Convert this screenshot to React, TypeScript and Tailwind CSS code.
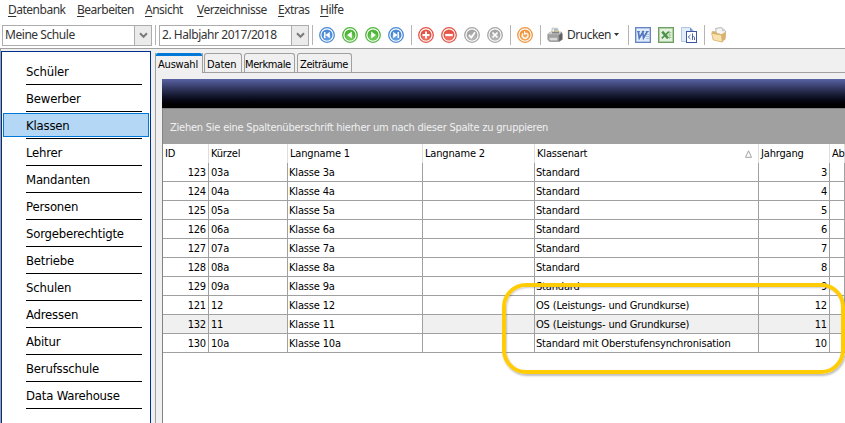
import React from "react";

const tahoma = "font-['DejaVu_Sans_Condensed','DejaVu_Sans',sans-serif] [font-stretch:condensed]";
const segoe = "font-['Noto_Sans','Open_Sans',sans-serif]";

const menu = [
  { t: "Datenbank", w: "w-[69px]" },
  { t: "Bearbeiten", w: "w-[68px]" },
  { t: "Ansicht", w: "w-[52px]" },
  { t: "Verzeichnisse", w: "w-[81px]" },
  { t: "Extras", w: "w-[42px]" },
  { t: "Hilfe", w: "w-[40px]" },
];

const nav = [
  "Schüler", "Bewerber", "Klassen", "Lehrer", "Mandanten", "Personen", "Sorgeberechtigte",
  "Betriebe", "Schulen", "Adressen", "Abitur", "Berufsschule", "Data Warehouse",
];

const rows = [
  ["123", "03a", "Klasse 3a", "Standard", "3"],
  ["124", "04a", "Klasse 4a", "Standard", "4"],
  ["125", "05a", "Klasse 5a", "Standard", "5"],
  ["126", "06a", "Klasse 6a", "Standard", "6"],
  ["127", "07a", "Klasse 7a", "Standard", "7"],
  ["128", "08a", "Klasse 8a", "Standard", "8"],
  ["129", "09a", "Klasse 9a", "Standard", "9"],
  ["121", "12", "Klasse 12", "OS (Leistungs- und Grundkurse)", "12"],
  ["132", "11", "Klasse 11", "OS (Leistungs- und Grundkurse)", "11"],
  ["130", "10a", "Klasse 10a", "Standard mit Oberstufensynchronisation", "10"],
];

const cols = "grid grid-cols-[46px_79px_135px_112px_224px_71px_15px]";

function Combo({ text }: { text: string }) {
  return (
    <div className="flex h-[21px] w-[150px] shrink-0 border border-[#acacac] bg-white">
      <span className="flex-1 pl-[2px] text-[12px] leading-[18px] tracking-[-0.45px] whitespace-nowrap">{text}</span>
      <span className="flex w-[17px] items-center justify-center border-l border-[#acacac] bg-[#ebebeb]">
        <svg width="9" height="7" viewBox="0 0 9 7">
          <path d="M1 1.2 4.5 4.8 8 1.2" fill="none" stroke="#7b7b7b" strokeWidth="2" />
        </svg>
      </span>
    </div>
  );
}

function Sep({ m }: { m: string }) {
  return <div className={`h-[20px] w-px shrink-0 bg-[#b4b4b4] ${m}`} />;
}

function Round({ c, light, children }: { c: string; light: string; children: React.ReactNode }) {
  return (
    <svg width="16" height="16" viewBox="0 0 16 16" className="shrink-0">
      <circle cx="8" cy="8" r="7.3" fill="#fff" stroke={c} strokeWidth="1.3" />
      <circle cx="8" cy="8" r="5.5" fill={c} />
      <ellipse cx="8" cy="10" rx="4.2" ry="3.2" fill={light} opacity=".5" />
      {children}
    </svg>
  );
}

function Toolbar() {
  return (
    <div className="flex h-[28px] items-center pl-[2px] text-[#333]">
      <Combo text="Meine Schule" />
      <Sep m="ml-[3px] mr-[3px]" />
      <Combo text="2. Halbjahr 2017/2018" />
      <Sep m="ml-[3px] mr-[6px]" />
      <div className="flex gap-[7px]">
        <Round c="#4a8ad6" light="#7db1ee">
          <path d="M5 5v6h1.5V5ZM10.8 4.8v6.4L6.6 8Z" fill="#fff" />
        </Round>
        <Round c="#4fb63a" light="#86dc70"><path d="M9.8 4.4v7.2L5.2 8Z" fill="#fff" /></Round>
        <Round c="#4fb63a" light="#86dc70"><path d="M6.2 4.4v7.2L10.8 8Z" fill="#fff" /></Round>
        <Round c="#4a8ad6" light="#7db1ee">
          <path d="M11 5v6H9.5V5ZM5.2 4.8v6.4L9.4 8Z" fill="#fff" />
        </Round>
      </div>
      <Sep m="ml-[7px] mr-[6px]" />
      <div className="flex gap-[7px]">
        <Round c="#e45546" light="#f88a7c"><path d="M8 4.5v7M4.5 8h7" stroke="#fff" strokeWidth="2" /></Round>
        <Round c="#e45546" light="#f88a7c"><path d="M4.2 8h7.6" stroke="#fff" strokeWidth="2.2" /></Round>
        <Round c="#a6a6a6" light="#c4c4c4"><path d="m5 8 2.3 2.6L11 5.2" fill="none" stroke="#fff" strokeWidth="1.7" /></Round>
        <Round c="#a6a6a6" light="#c4c4c4"><path d="m5.5 5.5 5 5m0-5-5 5" stroke="#fff" strokeWidth="1.7" /></Round>
      </div>
      <Sep m="ml-[7px] mr-[6px]" />
      <Round c="#f0953c" light="#fabb76">
        <path d="M5.9 6.4a2.9 2.9 0 1 0 4.6.3M7.6 4.2v2.7l2.8-.9" fill="none" stroke="#fff" strokeWidth="1.3" />
      </Round>
      <Sep m="ml-[7px] mr-[6px]" />
      <svg width="16" height="16" viewBox="0 0 16 16" className="shrink-0">
        <path d="M5 6V1.2h5.5L12 6Z" fill="#f4f1e6" stroke="#aaa" strokeWidth=".7" />
        <path d="M7.2 2h3l.5 3H7.2Z" fill="#7fb2e6" />
        <path d="M8 3.4 10 2.6l.5 2.4H7.4Z" fill="#f0cf6a" />
        <path d="M.5 7 3.5 4.8h11L15.7 7v5.5l-3.2 2.2h-10L.5 12.6Z" fill="#858585" />
        <path d="M.7 7 3.7 5h1.5l-.4 1.5h7.5L12 5h2.4l-2 2.5H1Z" fill="#d0d0d0" />
        <path d="M1.2 8h10.3v5.8H2.6l-1.4-1.4Z" fill="#a0a0a0" />
        <path d="M2.5 10.8h7.8v2.6H2.5Z" fill="#d8d8d8" />
        <path d="m12.3 8 2.7-1.6v5.6l-2.7 1.9Z" fill="#606060" />
      </svg>
      <span className="-mt-px ml-[4px] w-[47px] shrink-0 text-[12px] tracking-[-0.5px] whitespace-nowrap">Drucken</span>
      <svg width="5" height="3" viewBox="0 0 5 3" className="mb-px shrink-0"><path d="M0 0h5L2.5 3Z" fill="#333" /></svg>
      <Sep m="ml-[9px] mr-[6px]" />
      <div className="flex gap-[7px]">
        <svg width="16" height="16" viewBox="0 0 16 16">
          <rect x=".6" y=".6" width="14.8" height="14.8" fill="#c9d9f2" stroke="#6584c4" strokeWidth="1.2" />
          <path d="M2 2h12v12H2Z" fill="#e3ecf9" />
          <path d="M11 7.5h3M11 9.5h3M11 11.5h3" stroke="#9bb2dd" strokeWidth=".8" />
          <path d="m3.4 4.8.9 6.2 3.5-5.8.7 5.8 3.6-6.2" fill="none" stroke="#5276bd" strokeWidth="1.7" />
          <path d="M2 4.6h3M6.7 4.6h2.6M10.8 4.6h3" stroke="#5276bd" strokeWidth="1" />
        </svg>
        <svg width="16" height="16" viewBox="0 0 16 16">
          <rect x=".6" y=".6" width="14.8" height="14.8" fill="#c3dcb9" stroke="#6c9f61" strokeWidth="1.2" />
          <path d="M2 2h12v12H2Z" fill="#e4f0de" />
          <path d="M9.5 5.5h4M9.5 8h4M9.5 10.5h4M11.7 4v8" stroke="#9cc58f" strokeWidth=".8" />
          <path d="m4.2 4.6 5.8 6.8" stroke="#4c9146" strokeWidth="2.4" />
          <path d="m10.8 4.6-7 6.8" stroke="#4c9146" strokeWidth="1.5" />
        </svg>
        <svg width="16" height="16" viewBox="0 0 16 16">
          <path d="M.5.5h8.5l3 3v11H.5Z" fill="#e3edfa" stroke="#a9c1e3" strokeWidth=".9" />
          <path d="M9 .5v3.2h3.2Z" fill="#5f8fd0" />
          <rect x="5.5" y="4.5" width="10" height="11" fill="#fff" stroke="#3d57a8" />
          <path d="m9.5 8-2.3 2 2.3 2M11.5 6.5V13M11.5 10.5c0-1.2 2-1.2 2 0V13" fill="none" stroke="#3d57a8" strokeWidth=".9" />
        </svg>
      </div>
      <Sep m="ml-[7px] mr-[6px]" />
      <svg width="16" height="16" viewBox="0 0 16 16" className="shrink-0">
        <path d="M4.6 1.4 10.6.6l4 3.4-.9 8.6L6 11Z" fill="#f6f6f4" stroke="#a5a5a5" strokeWidth=".8" />
        <path d="m10.6.6.3 3.6 3.7-.2Z" fill="#ccc" />
        <path d="M.6 5 1.8 4l2.8.5.8 1.3 5.2 1.5 3.2-2 1.2.4-.6 6.3-3.4 3.2L1.9 13Z" fill="#d9b26c" />
        <path d="m.5 6.4 9.9 1.5 1 7.2L2.4 13Z" fill="#f8e3b0" stroke="#d3ab67" strokeWidth=".6" />
      </svg>
    </div>
  );
}

const tabs = [
  { t: "Daten", w: "w-[38px] pl-[2px] tracking-[-0.1px]" },
  { t: "Merkmale", w: "w-[51px] pl-0 tracking-[-0.4px]" },
  { t: "Zeiträume", w: "w-[55px] pl-[2px] tracking-[-0.4px]" },
];

function Tabs() {
  return (
    <div className="flex h-[22px] shrink-0 text-[11px] leading-[20px] whitespace-nowrap">
      <div className="mt-[2px] flex h-[20px] w-[48px] flex-col border-x border-[#a0a0a0]">
        <span className="h-[3px] shrink-0 rounded-t-[2px] bg-[#0078d7]" />
        <span className="pl-[2px] leading-[18px] tracking-[-0.2px]">Auswahl</span>
      </div>
      <div className="flex flex-1 gap-x-[2px] border-b border-[#a0a0a0] pt-[2px] pl-px">
        {tabs.map((x) => (
          <div key={x.t} className={`${x.w} rounded-t-[3px] border border-b-0 border-[#a0a0a0] pt-px`}>
            {x.t}
          </div>
        ))}
      </div>
    </div>
  );
}

const heads = ["ID", "Kürzel", "Langname 1", "Langname 2", "Klassenart", "Jahrgang", "Ab"];

function Grid() {
  return (
    <div className="flex flex-1 flex-col overflow-hidden border-t border-l border-[#838383] bg-white text-[11px] tracking-[-0.17px] whitespace-nowrap">
      <div className="h-[35px] shrink-0 bg-[#a0a0a0] pl-[7px] leading-[37px] tracking-[-0.23px] text-[#f0f0f0]">
        Ziehen Sie eine Spaltenüberschrift hierher um nach dieser Spalte zu gruppieren
      </div>
      <div className={`${cols} h-[19px] shrink-0 leading-[19px]`}>
        {heads.map((h, i) => (
          <div key={h} className="flex h-[19px] items-center justify-between border-r border-[#dedede] pr-[6px] pl-[2px]">
            <span>{h}</span>
            {i === 4 && (
              <svg width="7" height="8" viewBox="0 0 7 8"><path d="M3.5.8 6.5 7.3h-6Z" fill="none" stroke="#999" strokeWidth=".9" /></svg>
            )}
          </div>
        ))}
      </div>
      {rows.map((r) => {
        const bg = r[0] === "132" ? "bg-[#f0f0f0]" : "bg-white";
        const cell = "h-[19px] border-r border-b border-[#a0a0a0]";
        return (
          <div key={r[0]} className={`${cols} h-[19px] shrink-0 leading-[19px]`}>
            <div className={`${cell} ${bg} pr-[2px] text-right`}>{r[0]}</div>
            <div className={`${cell} ${bg} pl-[2px]`}>{r[1]}</div>
            <div className={`${cell} pl-px`}>{r[2]}</div>
            <div className={`${cell} ${bg}`} />
            <div className={`${cell} ${bg} pl-px`}>{r[3]}</div>
            <div className={`${cell} ${bg} pr-[2px] text-right`}>{r[4]}</div>
            <div className={`${cell} ${bg}`} />
          </div>
        );
      })}
    </div>
  );
}

export default function App() {
  return (
    <div className={`relative flex h-[423px] w-[845px] flex-col overflow-hidden bg-white text-black ${tahoma}`}>
      <div className={segoe}>
        <div className="flex h-[21px] pl-[8px] text-[12px] leading-[20px] tracking-[-0.5px] text-[#333]">
          {menu.map((m) => (
            <span key={m.t} className={`${m.w} shrink-0`}>
              <span className="underline underline-offset-2">{m.t[0]}</span>{m.t.slice(1)}
            </span>
          ))}
        </div>
        <Toolbar />
      </div>
      <div className="-mt-px flex min-h-0 flex-1 border-t border-[#a0a0a0] bg-[#f0f0f0]">
        <aside className="flex w-[151px] shrink-0 border-l border-[#a0a0a0] pt-[2px]">
          <div className="flex-1 border border-b-0 border-[#00308f] bg-white px-px pt-[7px]">
            {nav.map((n) => (
              <div key={n} className="h-[27px]">
                <div
                  className={`-mb-px h-[24px] border pl-[22px] text-[13px] leading-[23px] whitespace-nowrap tracking-[-0.2px] ${
                    n === "Klassen" ? "border-[#0078d7] bg-[#b3d7f4]" : "border-transparent"
                  }`}
                >
                  {n}
                </div>
                <div className="mt-[2px] mr-[7px] ml-[23px] h-px bg-black" />
              </div>
            ))}
          </div>
        </aside>
        <main className="ml-[4px] flex min-w-0 flex-1 flex-col pt-[2px]">
          <Tabs />
          <div className="flex min-h-0 flex-1 flex-col border-l border-[#a0a0a0] pt-[6px] pl-[6px]">
            <div className="h-[29px] shrink-0 bg-linear-to-b from-[#5a63a5] to-black" />
            <Grid />
          </div>
        </main>
      </div>
      <div className="absolute top-[283px] left-[502px] h-[91px] w-[343px] rounded-[24px] border-[4px] border-[#ffcc06] shadow-[1px_2px_2px_rgba(0,0,0,0.25),inset_1px_1px_2px_rgba(0,0,0,0.2)]" />
    </div>
  );
}
